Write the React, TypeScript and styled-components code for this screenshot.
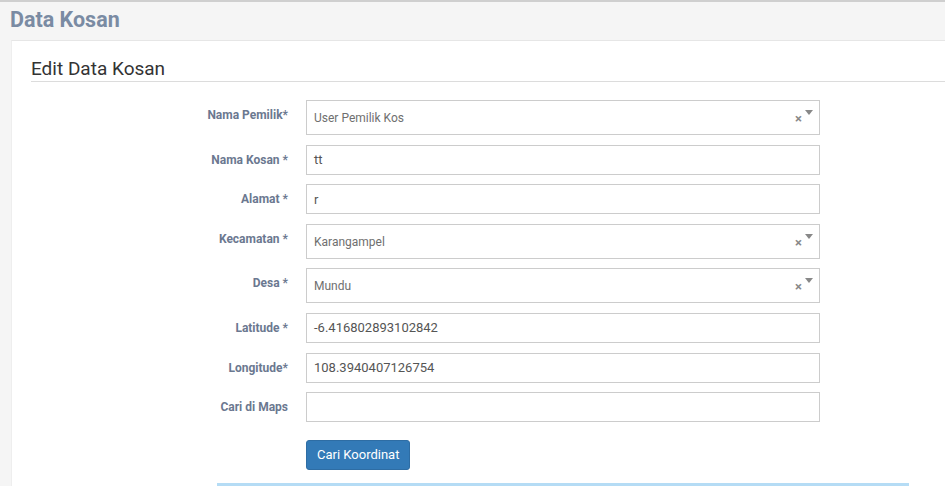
import React from 'react'
import styled, {createGlobalStyle} from 'styled-components'

const GlobalStyle = createGlobalStyle`
  html, body {
    margin: 0;
    padding: 0;
    background: #f5f5f5;
    font-family: Roboto, 'Liberation Sans', Arial, sans-serif;
    overflow: hidden;
  }
  * {
    box-sizing: border-box;
  }
`

const Page = styled.div`
  width: 945px;
  height: 486px;
  border-top: 2px solid #cfcfcf;
  overflow: hidden;
`

const PageTitle = styled.h1`
  margin: 0;
  padding: 4px 10px 0;
  height: 38px;
  font-size: 21.5px;
  font-weight: 700;
  line-height: 27px;
  color: #7a8ba3;
`

const Box = styled.div`
  margin-left: 11px;
  background: #fff;
  border-top: 1px solid #e6e6e6;
  border-left: 1px solid #eeeeee;
  padding: 15px 0 0 19px;
  height: 460px;
`

const BoxTitle = styled.h2`
  margin: 0;
  font-size: 19px;
  font-weight: 400;
  color: #333;
  line-height: 25px;
  border-bottom: 1px solid #dcdcdc;
`

const Form = styled.div`
  display: grid;
  grid-template-columns: 275px 514px;
  row-gap: 9.6px;
  margin-top: 18px;
`

const Label = styled.label`
  text-align: right;
  padding-right: 18px;
  padding-top: 7px;
  font-size: 12px;
  font-weight: 700;
  line-height: 16px;
  color: #6b7890;
`

const Input = styled.div<{tall?: boolean}>`
  height: ${(p) => (p.tall ? '35px' : '30px')};
  border: 1px solid #cccccc;
  background: #fff;
  display: flex;
  align-items: center;
  padding: 0 8px 0 7px;
  font-size: 13px;
  color: #555;
`

const SelectBox = styled(Input)`
  position: relative;
  font-size: 12px;
  color: #6f6f6f;
`

const SelectText = styled.span`
  flex: 1;
  padding-top: 1px;
`

const Clear = styled.span`
  font-size: 13px;
  font-weight: 700;
  color: #888;
  margin-right: 9px;
  margin-top: 2px;
`

const Arrow = styled.span`
  position: absolute;
  right: 6px;
  top: 9px;
  width: 0;
  height: 0;
  border-left: 4px solid transparent;
  border-right: 4px solid transparent;
  border-top: 5px solid #888;
`

const Button = styled.button`
  grid-column: 2;
  justify-self: start;
  margin-top: 8px;
  height: 30px;
  padding: 0 10px;
  background: #337ab7;
  border: 1px solid #2e6da4;
  border-radius: 3px;
  color: #fff;
  font-family: Roboto, 'Liberation Sans', Arial, sans-serif;
  font-size: 13px;
`

const Divider = styled.div`
  margin: 13px 0 0 186px;
  width: 692px;
  height: 3px;
  background: #b5dcf5;
`

const Select: React.FC<{value: string}> = ({value}) => (
  <SelectBox tall>
    <SelectText>{value}</SelectText>
    <Clear>×</Clear>
    <Arrow />
  </SelectBox>
)

export default function App() {
  return (
    <>
      <GlobalStyle />
      <Page>
        <PageTitle>Data Kosan</PageTitle>
        <Box>
          <BoxTitle>Edit Data Kosan</BoxTitle>
          <Form>
            <Label>Nama Pemilik*</Label>
            <Select value="User Pemilik Kos" />
            <Label>Nama Kosan *</Label>
            <Input>tt</Input>
            <Label>Alamat *</Label>
            <Input>r</Input>
            <Label>Kecamatan *</Label>
            <Select value="Karangampel" />
            <Label>Desa *</Label>
            <Select value="Mundu" />
            <Label>Latitude *</Label>
            <Input>-6.416802893102842</Input>
            <Label>Longitude*</Label>
            <Input>108.3940407126754</Input>
            <Label>Cari di Maps</Label>
            <Input />
            <Button>Cari Koordinat</Button>
          </Form>
          <Divider />
        </Box>
      </Page>
    </>
  )
}
